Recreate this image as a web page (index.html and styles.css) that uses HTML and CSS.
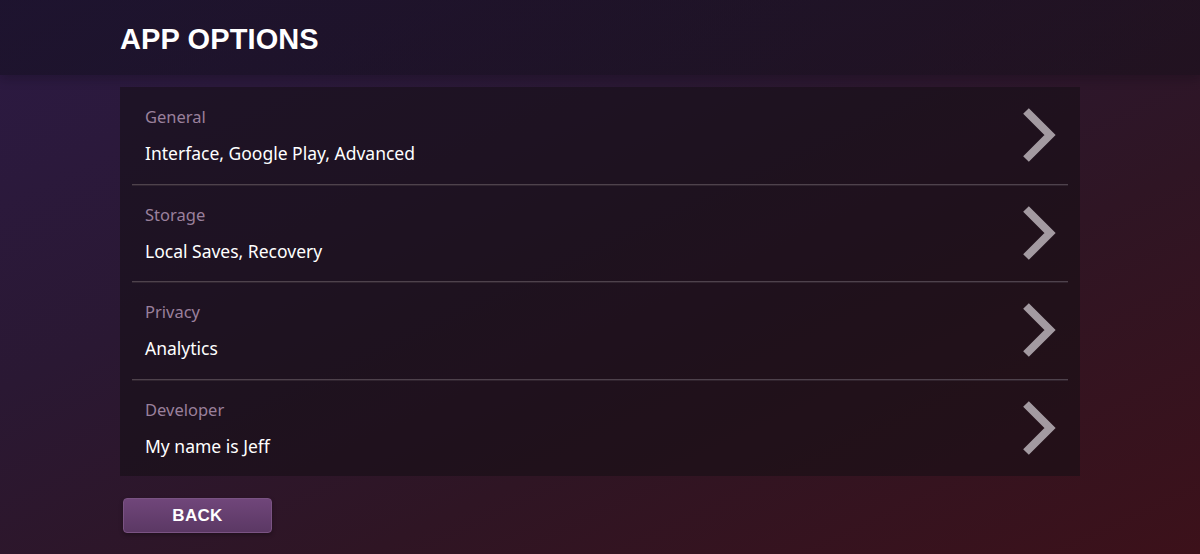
FILE: index.html
```html
<!DOCTYPE html>
<html>
<head>
<meta charset="utf-8">
<link rel="stylesheet" href="styles.css">
</head>
<body>
<div class="screen">
  <header class="topbar">
    <h1 class="title">APP OPTIONS</h1>
  </header>
  <main class="content">
    <section class="panel">
      <div class="row">
        <div class="texts">
          <div class="label">General</div>
          <div class="sub">Interface, Google Play, Advanced</div>
        </div>
        <svg class="chev" viewBox="0 0 36 56" width="36" height="56"><polyline points="5,4 29,28 5,52" fill="none" stroke="#a39aa1" stroke-width="8"/></svg>
      </div>
      <div class="sep"></div>
      <div class="row">
        <div class="texts">
          <div class="label">Storage</div>
          <div class="sub">Local Saves, Recovery</div>
        </div>
        <svg class="chev" viewBox="0 0 36 56" width="36" height="56"><polyline points="5,4 29,28 5,52" fill="none" stroke="#a39aa1" stroke-width="8"/></svg>
      </div>
      <div class="sep"></div>
      <div class="row">
        <div class="texts">
          <div class="label">Privacy</div>
          <div class="sub">Analytics</div>
        </div>
        <svg class="chev" viewBox="0 0 36 56" width="36" height="56"><polyline points="5,4 29,28 5,52" fill="none" stroke="#a39aa1" stroke-width="8"/></svg>
      </div>
      <div class="sep"></div>
      <div class="row">
        <div class="texts">
          <div class="label">Developer</div>
          <div class="sub">My name is Jeff</div>
        </div>
        <svg class="chev" viewBox="0 0 36 56" width="36" height="56"><polyline points="5,4 29,28 5,52" fill="none" stroke="#a39aa1" stroke-width="8"/></svg>
      </div>
    </section>
    <button class="back">BACK</button>
  </main>
</div>
</body>
</html>
```
FILE: styles.css
```css
html, body {
  margin: 0;
  padding: 0;
  width: 1200px;
  height: 554px;
  overflow: hidden;
}
body {
  background: linear-gradient(155deg, #2c1a44 0%, #2a1833 35%, #2f1524 65%, #3c111a 100%);
  font-family: "Noto Sans", "Open Sans", sans-serif;
}
.screen {
  width: 1200px;
  height: 554px;
  display: flex;
  flex-direction: column;
}
.topbar {
  height: 75px;
  background: linear-gradient(90deg, rgba(18,14,30,0.55), rgba(22,14,24,0.5));
  box-shadow: 0 4px 10px rgba(10,6,14,0.25);
  display: flex;
  align-items: center;
  padding-left: 120px;
  padding-top: 4px;
  box-sizing: border-box;
}
.title {
  margin: 0;
  font-family: "Liberation Sans", Arial, sans-serif;
  font-weight: bold;
  font-size: 29px;
  letter-spacing: 0.1px;
  color: #ffffff;
  line-height: 1;
}
.content {
  padding: 12px 120px 0 120px;
  display: flex;
  flex-direction: column;
  align-items: flex-start;
}
.panel {
  width: 960px;
  background: rgba(20, 14, 20, 0.55);
  display: flex;
  flex-direction: column;
}
.row {
  height: 96.5px;
  display: flex;
  align-items: center;
  justify-content: space-between;
  padding: 0 25px;
  box-sizing: border-box;
}
.texts {
  display: flex;
  flex-direction: column;
  gap: 12px;
}
.label {
  font-size: 16.5px;
  line-height: 24px;
  color: #9a809c;
}
.sub {
  font-size: 17.5px;
  line-height: 24px;
  color: #ffffff;
}
.chev {
  display: block;
  margin-right: -2px;
}
.sep {
  height: 1px;
  margin: 0 12px;
  background: #4e424c;
  box-shadow: 0 1px 0 rgba(60,48,58,0.6);
}
.back {
  margin-top: 22px;
  margin-left: 3px;
  width: 149px;
  height: 35px;
  border: 1px solid #7a5383;
  border-radius: 4px;
  background: linear-gradient(180deg, #70467a 0%, #5b3864 100%);
  color: #ffffff;
  font-family: "Liberation Sans", Arial, sans-serif;
  font-weight: bold;
  font-size: 17px;
  letter-spacing: 0.3px;
  padding: 0;
  box-shadow: 0 2px 4px rgba(0,0,0,0.3);
}
```
